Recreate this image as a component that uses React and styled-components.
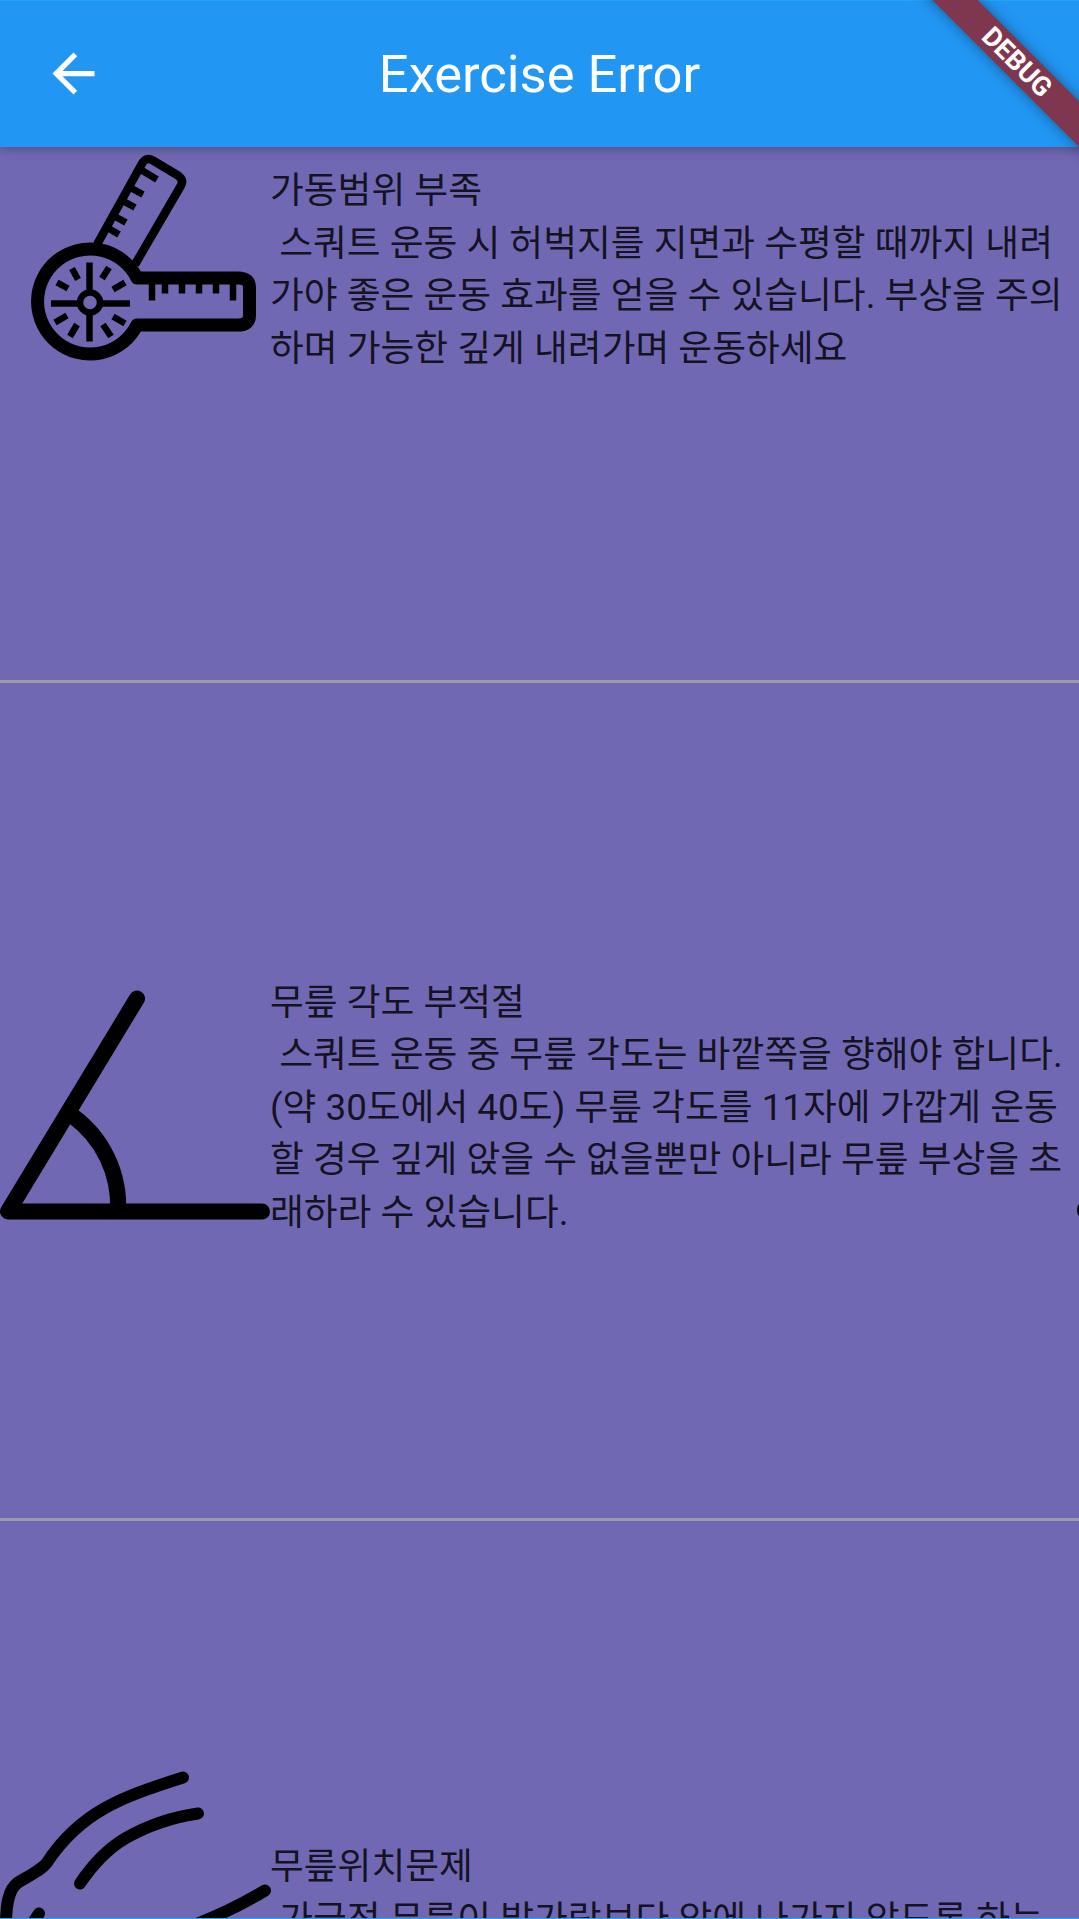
import React from "react";
import styled, { createGlobalStyle } from "styled-components";

const GlobalStyle = createGlobalStyle`
	html, body {
		margin: 0;
		padding: 0;
		background: #7068b3;
	}
`;

// Layout containers
const Screen = styled.div`
	position: relative;
	width: 1079px;
	height: 1919px;
	overflow: hidden;
	background: #7068b3;
	display: flex;
	flex-direction: column;
`;

const AppBar = styled.header`
	position: relative;
	z-index: 2;
	flex: none;
	box-sizing: border-box;
	height: 147px;
	display: flex;
	align-items: center;
	justify-content: center;
	background: #2196f3;
	border-top: 1px solid #1ea4fa;
	box-shadow: 0 3px 9px rgba(0, 0, 0, 0.22);
`;

const BackButton = styled.svg`
	position: absolute;
	left: 42px;
	top: 41px;
	width: 63px;
	height: 63px;
	fill: #fff;
`;

const Title = styled.h1`
	margin: 0;
	color: #fff;
	font-family: Roboto, "Liberation Sans", sans-serif;
	font-size: 52.5px;
	font-weight: 400;
	line-height: 1;
`;

const Banner = styled.div`
	position: absolute;
	z-index: 3;
	top: 46px;
	right: -88px;
	width: 300px;
	height: 32px;
	display: flex;
	align-items: center;
	justify-content: center;
	transform: rotate(45deg);
	background: #7f3750;
	box-shadow: 0 0 14px rgba(0, 0, 0, 0.4);
	color: #fff;
	font-family: Roboto, "Liberation Sans", sans-serif;
	font-size: 27px;
	font-weight: 700;
	line-height: 1;
`;

const Viewport = styled.main`
	flex: 1;
	min-height: 0;
	overflow: hidden;
	border-bottom: 1px solid #1ea4fa;
`;

// The list is scrolled part way down its first item
const List = styled.div`
	margin-top: -302px;
`;

const Item = styled.section`
	position: relative;
	box-sizing: border-box;
	height: 838px;
	display: flex;
	align-items: center;
	border-bottom: 3px solid #9c9aa8;
`;

const Icon = styled.svg`
	flex: none;
	width: 270px;
	height: ${(p) => p.$height}px;
	overflow: visible;
`;

const Body = styled.p`
	flex: 1;
	min-width: 0;
	margin: 0;
	padding-top: 15px;
	color: rgba(0, 0, 0, 0.84);
	font-family: Roboto, "Noto Sans CJK KR", "Noto Sans", sans-serif;
	font-size: 36.75px;
	font-weight: 400;
	line-height: 52.5px;
	white-space: pre-wrap;
	word-break: break-all;
`;

const Peek = styled.span`
	position: absolute;
	right: -6px;
	top: ${(p) => p.$top}px;
	width: 8px;
	height: 14px;
	border-radius: 50%;
	background: #000;
`;

const GoniometerIcon = () => (
	<Icon $height={270} viewBox="0 127.5 270 270" fill="none" stroke="#000" strokeLinecap="butt" strokeLinejoin="round">
		<path strokeWidth="13" d="M137 277.5H238Q249.5 277.5 249.5 287V315Q249.5 324.5 238 324.5H137A52.5 52.5 0 1 1 137 277.5Z" />
		<path strokeWidth="8.5" d="M97 244L142 163Q146 156 153 160L178 175Q184 179 181 185L135 264" />
		<path strokeWidth="7" d="M142 170L157 179M130 187L143 194M122 200L135 207M113 215L126 222M107 227L119 234" />
		<path strokeWidth="6.5" d="M152 283V300M165 283V293M182 283V293M199 283V293M216 283V293M233 283V300" />
		<path strokeWidth="6.5" d="M89.5 262V341M51 303H130" />
		<path strokeWidth="6.5" d="M72 268L78 279M57 282L68 288M55 322L67 315M70 336L77 324M102 278L109 267M113 289L125 282M113 316L125 323M103 324L111 336" />
		<circle cx="90" cy="302" r="10" strokeWidth="6.5" fill="#7068b3" />
	</Icon>
);

const AngleIcon = () => (
	<Icon $height={270} viewBox="0 965.5 270 270" fill="none" stroke="#000" strokeWidth="16" strokeLinecap="round" strokeLinejoin="round">
		<path d="M137 998L8 1211H262" />
		<path strokeLinecap="butt" d="M72 1115A111 111 0 0 1 118 1211" />
	</Icon>
);

const KneeIcon = () => (
	<Icon $height={400} viewBox="0 1738.5 270 400" fill="none" stroke="#000" strokeWidth="12" strokeLinecap="round" strokeLinejoin="round">
		<path d="M183 1777C120 1797 80 1812 47 1862C42 1869 30 1875 18 1882C8 1889 6 1905 6 1925" />
		<path d="M198 1813C170 1817 146 1826 125 1838C105 1850 92 1865 80 1883" />
		<path d="M39 1913L31 1925" />
		<path d="M265 1890C240 1905 220 1915 190 1926" />
	</Icon>
);

const App = () => (
	<Screen>
		<GlobalStyle />
		<AppBar>
			<BackButton viewBox="0 0 24 24">
				<path d="M20 11H7.83l5.59-5.59L12 4l-8 8 8 8 1.41-1.41L7.83 13H20v-2z" />
			</BackButton>
			<Title>Exercise Error</Title>
		</AppBar>
		<Banner>DEBUG</Banner>
		<Viewport>
			<List>
				<Item>
					<GoniometerIcon />
					<Body>{"가동범위 부족\n 스쿼트 운동 시 허벅지를 지면과 수평할 때까지 내려가야 좋은 운동 효과를 얻을 수 있습니다. 부상을 주의하며 가능한 깊게 내려가며 운동하세요"}</Body>
				</Item>
				<Item>
					<AngleIcon />
					<Body>{"무릎 각도 부적절\n 스쿼트 운동 중 무릎 각도는 바깥쪽을 향해야 합니다. (약 30도에서 40도) 무릎 각도를 11자에 가깝게 운동할 경우 깊게 앉을 수 없을뿐만 아니라 무릎 부상을 초래하라 수 있습니다."}</Body>
					<Peek $top={520} />
				</Item>
				<Item>
					<KneeIcon />
					<Body>{"무릎위치문제\n 가급적 무릎이 발가락보다 앞에 나가지 않도록 하는 것이 좋습니다. 무릎이 앞으로 나가면 무릎에 부담이 커져 부상의 위험이 있습니다."}</Body>
				</Item>
			</List>
		</Viewport>
	</Screen>
);

export default App;
